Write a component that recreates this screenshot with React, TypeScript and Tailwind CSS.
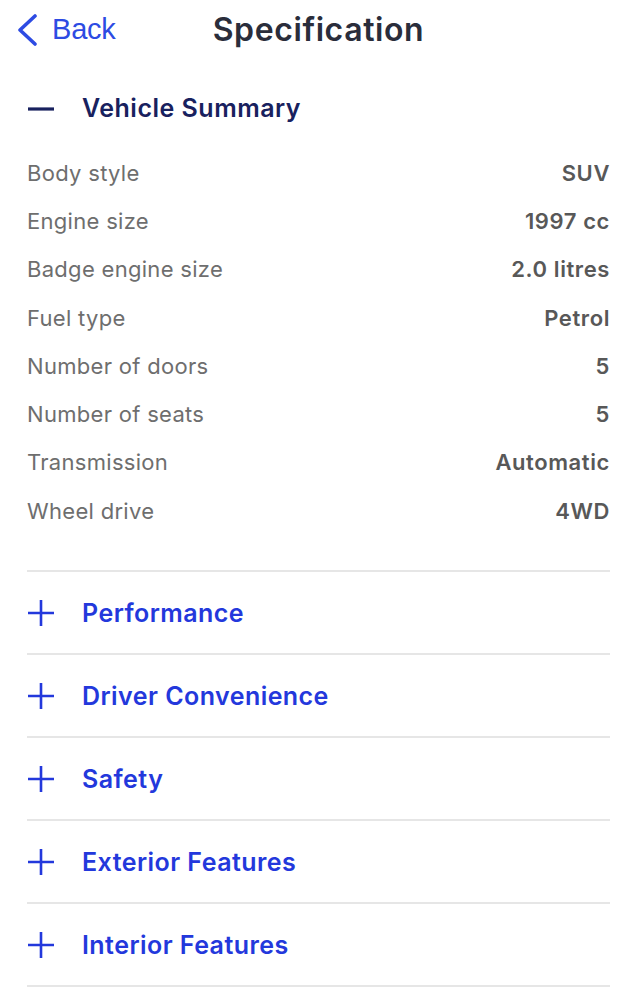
const specs: [string, string][] = [
  ["Body style", "SUV"],
  ["Engine size", "1997 cc"],
  ["Badge engine size", "2.0 litres"],
  ["Fuel type", "Petrol"],
  ["Number of doors", "5"],
  ["Number of seats", "5"],
  ["Transmission", "Automatic"],
  ["Wheel drive", "4WD"],
];

const sections = [
  "Performance",
  "Driver Convenience",
  "Safety",
  "Exterior Features",
  "Interior Features",
];

function PlusIcon() {
  return (
    <svg width="28" height="28" viewBox="0 0 28 28" className="shrink-0">
      <path d="M1 14h26M14 1v26" stroke="currentColor" strokeWidth="2.6" />
    </svg>
  );
}

function MinusIcon() {
  return (
    <svg width="28" height="28" viewBox="0 0 28 28" className="shrink-0">
      <path d="M1 14h26" stroke="currentColor" strokeWidth="3.2" />
    </svg>
  );
}

export default function App() {
  return (
    <div className="w-[637px] h-[999px] bg-white overflow-hidden font-['Inter',sans-serif]">
      {/* header */}
      <div className="grid grid-cols-[1fr_auto_1fr] items-center h-[60px]">
        <div className="flex items-center pl-[16px] text-[#2d4be3]">
          <svg width="22" height="32" viewBox="0 0 22 32" className="shrink-0">
            <path d="M19 2L4 16l15 14" fill="none" stroke="currentColor" strokeWidth="3.6" strokeLinecap="round" strokeLinejoin="round" />
          </svg>
          <span className="ml-[14px] text-[29px] font-['Liberation_Sans',sans-serif] tracking-[-0.2px]">Back</span>
        </div>
        <h1 className="text-[32px] font-semibold text-[#2a2d3b] tracking-[0.6px]">Specification</h1>
        <div />
      </div>

      <div className="px-[27px]">
        {/* expanded section */}
        <div className="mt-[34px] h-[30px] flex items-center text-[#18215e]">
          <MinusIcon />
          <span className="ml-[27px] text-[25px] font-semibold tracking-[0.5px]">Vehicle Summary</span>
        </div>

        <div className="mt-[25px]">
          {specs.map(([label, value]) => (
            <div key={label} className="h-[48.3px] flex items-center justify-between text-[22px] tracking-[0.3px]">
              <span className="text-[#6e6e6e]">{label}</span>
              <span className="font-semibold text-[#585858] tracking-[0.6px]">{value}</span>
            </div>
          ))}
        </div>

        {/* collapsed sections */}
        <div className="mt-[35px]">
          {sections.map((s) => (
            <div key={s}>
              <div className="h-[2px] bg-[#e6e6e6]" />
              <div className="h-[81px] flex items-center text-[#2338dc] pt-[1px]">
                <PlusIcon />
                <span className="ml-[27px] text-[25px] font-semibold tracking-[0.45px]">{s}</span>
              </div>
            </div>
          ))}
          <div className="h-[2px] bg-[#e6e6e6]" />
        </div>
      </div>
    </div>
  );
}
